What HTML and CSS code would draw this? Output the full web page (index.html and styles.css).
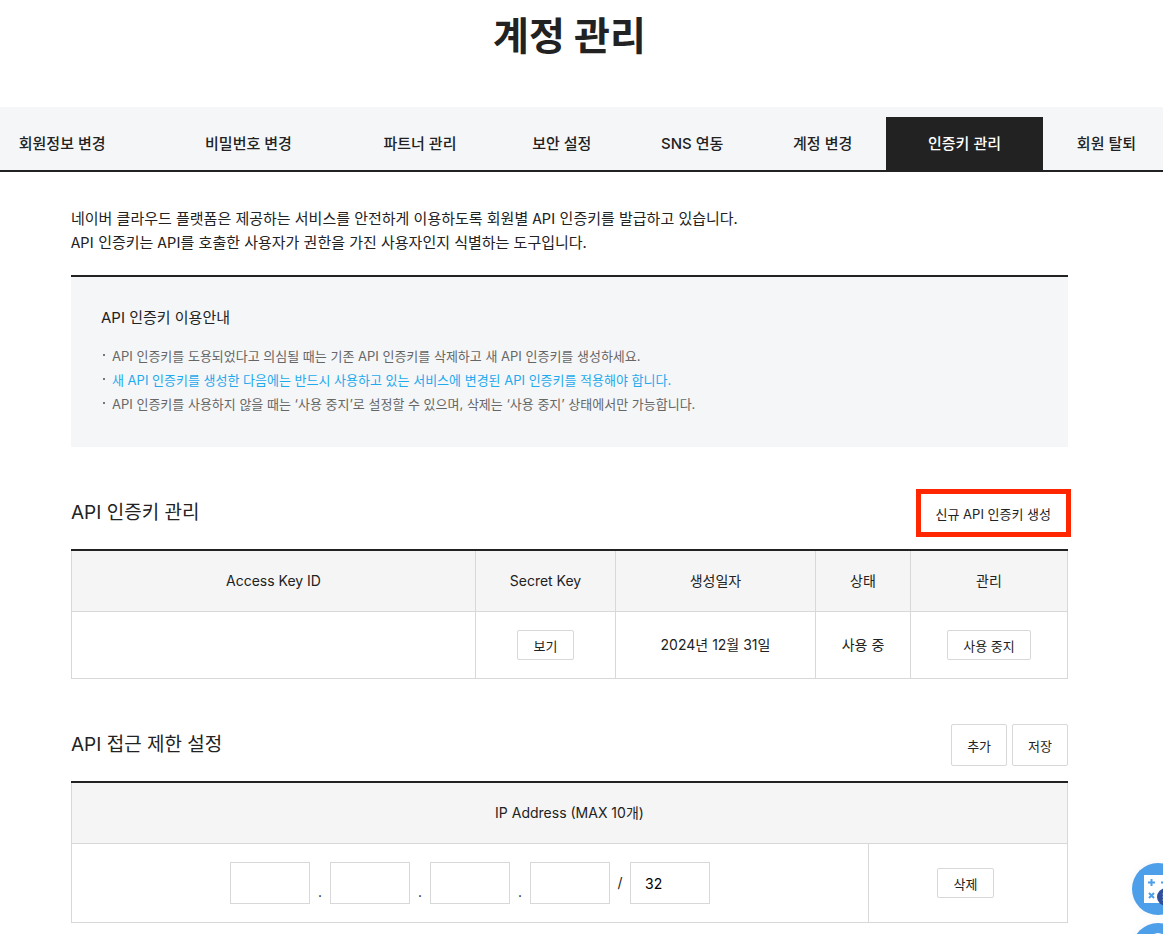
FILE: index.html
```html
<!DOCTYPE html>
<html lang="ko">
<head>
    <meta charset="UTF-8">
    <meta name="viewport" content="width=device-width, initial-scale=1.0">
    <title>계정 관리</title>
    <link rel="stylesheet" href="styles.css">
</head>
<body>
    <h1 class="page-title">계정 관리</h1>

    <nav class="nav">
        <ul class="tabs">
            <li><a href="#">회원정보 변경</a></li>
            <li><a href="#">비밀번호 변경</a></li>
            <li><a href="#">파트너 관리</a></li>
            <li><a href="#">보안 설정</a></li>
            <li><a href="#">SNS 연동</a></li>
            <li><a href="#">계정 변경</a></li>
            <li><a href="#" class="active" aria-current="page">인증키 관리</a></li>
            <li><a href="#">회원 탈퇴</a></li>
        </ul>
    </nav>

    <main class="container">
        <p class="intro">네이버 클라우드 플랫폼은 제공하는 서비스를 안전하게 이용하도록 회원별 API 인증키를 발급하고 있습니다.<br>
           API 인증키는 API를 호출한 사용자가 권한을 가진 사용자인지 식별하는 도구입니다.</p>

        <div class="guide">
            <h2>API 인증키 이용안내</h2>
            <ul>
                <li>API 인증키를 도용되었다고 의심될 때는 기존 API 인증키를 삭제하고 새 API 인증키를 생성하세요.</li>
                <li><span class="point">새 API 인증키를 생성한 다음에는 반드시 사용하고 있는 서비스에 변경된 API 인증키를 적용해야 합니다.</span></li>
                <li>API 인증키를 사용하지 않을 때는 ‘사용 중지’로 설정할 수 있으며, 삭제는 ‘사용 중지’ 상태에서만 가능합니다.</li>
            </ul>
        </div>

        <section class="section">
            <div class="section-header">
                <h2>API 인증키 관리</h2>
                <button type="button" class="btn btn-new">신규 API 인증키 생성</button>
            </div>
            <table>
                <colgroup>
                    <col>
                    <col class="col-secret">
                    <col class="col-date">
                    <col class="col-status">
                    <col class="col-manage">
                </colgroup>
                <thead>
                    <tr>
                        <th scope="col">Access Key ID</th>
                        <th scope="col">Secret Key</th>
                        <th scope="col">생성일자</th>
                        <th scope="col">상태</th>
                        <th scope="col">관리</th>
                    </tr>
                </thead>
                <tbody>
                    <tr>
                        <td></td>
                        <td><button type="button" class="btn btn-small">보기</button></td>
                        <td>2024년 12월 31일</td>
                        <td>사용 중</td>
                        <td><button type="button" class="btn btn-small">사용 중지</button></td>
                    </tr>
                </tbody>
            </table>
        </section>

        <section class="section">
            <div class="section-header">
                <h2>API 접근 제한 설정</h2>
                <div class="buttons">
                    <button type="button" class="btn">추가</button>
                    <button type="button" class="btn">저장</button>
                </div>
            </div>
            <table>
                <colgroup>
                    <col>
                    <col class="col-delete">
                </colgroup>
                <thead>
                    <tr>
                        <th scope="col" colspan="2">IP Address (MAX 10개)</th>
                    </tr>
                </thead>
                <tbody>
                    <tr>
                        <td>
                            <div class="ip">
                                <input type="text" aria-label="IP 1">
                                <span class="dot">.</span>
                                <input type="text" aria-label="IP 2">
                                <span class="dot">.</span>
                                <input type="text" aria-label="IP 3">
                                <span class="dot">.</span>
                                <input type="text" aria-label="IP 4">
                                <span>/</span>
                                <input type="text" aria-label="서브넷 마스크" value="32">
                            </div>
                        </td>
                        <td class="delete"><button type="button" class="btn btn-small">삭제</button></td>
                    </tr>
                </tbody>
            </table>
        </section>
    </main>

    <div class="quick">
        <a href="#" class="quick-link" aria-label="요금 계산기">
            <svg viewBox="0 0 52 52" width="52" height="52">
                <rect x="12" y="12" width="28" height="28" fill="#fff"/>
                <path d="M16 19.500h7M19.500 16v7M29 19.500h7M17 30l5 5M22 30l-5 5" stroke="#4d9fea" stroke-width="2" fill="none"/>
                <circle cx="34" cy="34" r="9" fill="#2f4f9d"/>
                <path d="M30 31h8M30 34h8M30 37h8" stroke="#8fa4d6" stroke-width="1"/>
            </svg>
        </a>
        <a href="#" class="quick-link" aria-label="문의하기">
            <svg viewBox="0 0 52 52" width="52" height="52">
                <circle cx="26" cy="19" r="9" fill="#fff"/>
                <path d="M12 42c0-9 6-14 14-14s14 5 14 14z" fill="#fff"/>
            </svg>
        </a>
    </div>
</body>
</html>
```
FILE: styles.css
```css
* {
    margin: 0;
    padding: 0;
    box-sizing: border-box;
}

body {
    font-family: Inter, 'Noto Sans CJK KR', sans-serif;
    font-size: 15px;
    line-height: 24px;
    color: #222;
    background: #fff;
    overflow-x: hidden;
}

ul {
    list-style: none;
}

a {
    color: inherit;
    text-decoration: none;
}

.page-title {
    padding: 6px 24px 41px 0;
    font-size: 39px;
    line-height: 60px;
    font-weight: 700;
    text-align: center;
}

.nav {
    padding-top: 10px;
    background: #f5f6f8;
    border-bottom: 2px solid #222;
    overflow: hidden;
}

.tabs {
    display: table;
    width: calc(100% + 38px);
    margin-left: -31px;
}

.tabs li {
    display: table-cell;
}

.tabs a {
    display: block;
    font-weight: 500;
    line-height: 53px;
    text-align: center;
    white-space: nowrap;
}

.tabs .active {
    background: #222;
    color: #fff;
}

.container {
    padding: 34px 95px 12px 71px;
}

.intro {
    font-family: 'Noto Sans CJK KR', sans-serif;
}

.guide {
    margin-top: 21px;
    padding: 29px 30px 31px;
    background: #f5f6f8;
    border-top: 2px solid #222;
}

.guide h2 {
    margin-bottom: 14px;
    font-size: 15px;
    font-weight: 400;
}

.guide li {
    position: relative;
    padding-left: 11px;
    font-size: 13px;
    color: #666;
}

.guide li::before {
    content: '';
    position: absolute;
    top: 10px;
    left: 2px;
    width: 2px;
    height: 2px;
    background: #777;
}

.point {
    color: #1eaaec;
}

.section {
    margin-top: 45px;
}

.section-header {
    display: flex;
    justify-content: space-between;
    align-items: center;
    height: 42px;
    margin-bottom: 15px;
}

.section-header h2 {
    font-size: 19px;
    font-weight: 400;
}

.buttons {
    display: flex;
    gap: 5px;
}

.btn {
    height: 42px;
    padding: 0 15px;
    font-family: inherit;
    font-size: 13px;
    color: #222;
    background: #fff;
    border: 1px solid #d8d8d8;
    border-radius: 2px;
    cursor: pointer;
}

.btn-small {
    min-width: 57px;
    height: 30px;
}

.btn-new {
    padding: 0 16px;
    border-color: transparent;
    border-radius: 0;
    outline: 5px solid #ff2600;
    outline-offset: -2px;
}

table {
    width: 100%;
    table-layout: fixed;
    border-collapse: separate;
    border-spacing: 0;
    border-top: 2px solid #222;
    font-size: 14px;
}

th,
td {
    border-right: 1px solid #d8d8d8;
    border-bottom: 1px solid #d8d8d8;
    text-align: center;
    vertical-align: middle;
}

th:first-child,
td:first-child {
    border-left: 1px solid #d8d8d8;
}

th {
    height: 61px;
    background: #f5f5f5;
    font-weight: 400;
}

td {
    padding: 18px 0;
}

.col-secret {
    width: 140px;
}

.col-date {
    width: 200px;
}

.col-status {
    width: 95px;
}

.col-manage {
    width: 157px;
}

.col-delete {
    width: 199px;
}

td .btn {
    display: block;
    margin: 0 auto;
}

.delete {
    padding-right: 5px;
}

.ip {
    display: flex;
    justify-content: center;
    align-items: center;
}

.ip input {
    width: 80px;
    height: 42px;
    padding: 0 14px;
    border: 1px solid #d8d8d8;
    font-family: inherit;
    font-size: 14px;
    color: #000;
}

.ip span {
    width: 20px;
}

.ip .dot {
    align-self: flex-end;
}

.quick {
    position: fixed;
    right: -21px;
    bottom: -41px;
    display: flex;
    flex-direction: column;
    gap: 8px;
}

.quick-link {
    width: 52px;
    height: 52px;
    border-radius: 50%;
    background: #4d9fea;
    box-shadow: 0 0 10px rgba(0, 0, 0, 0.05);
}
```
